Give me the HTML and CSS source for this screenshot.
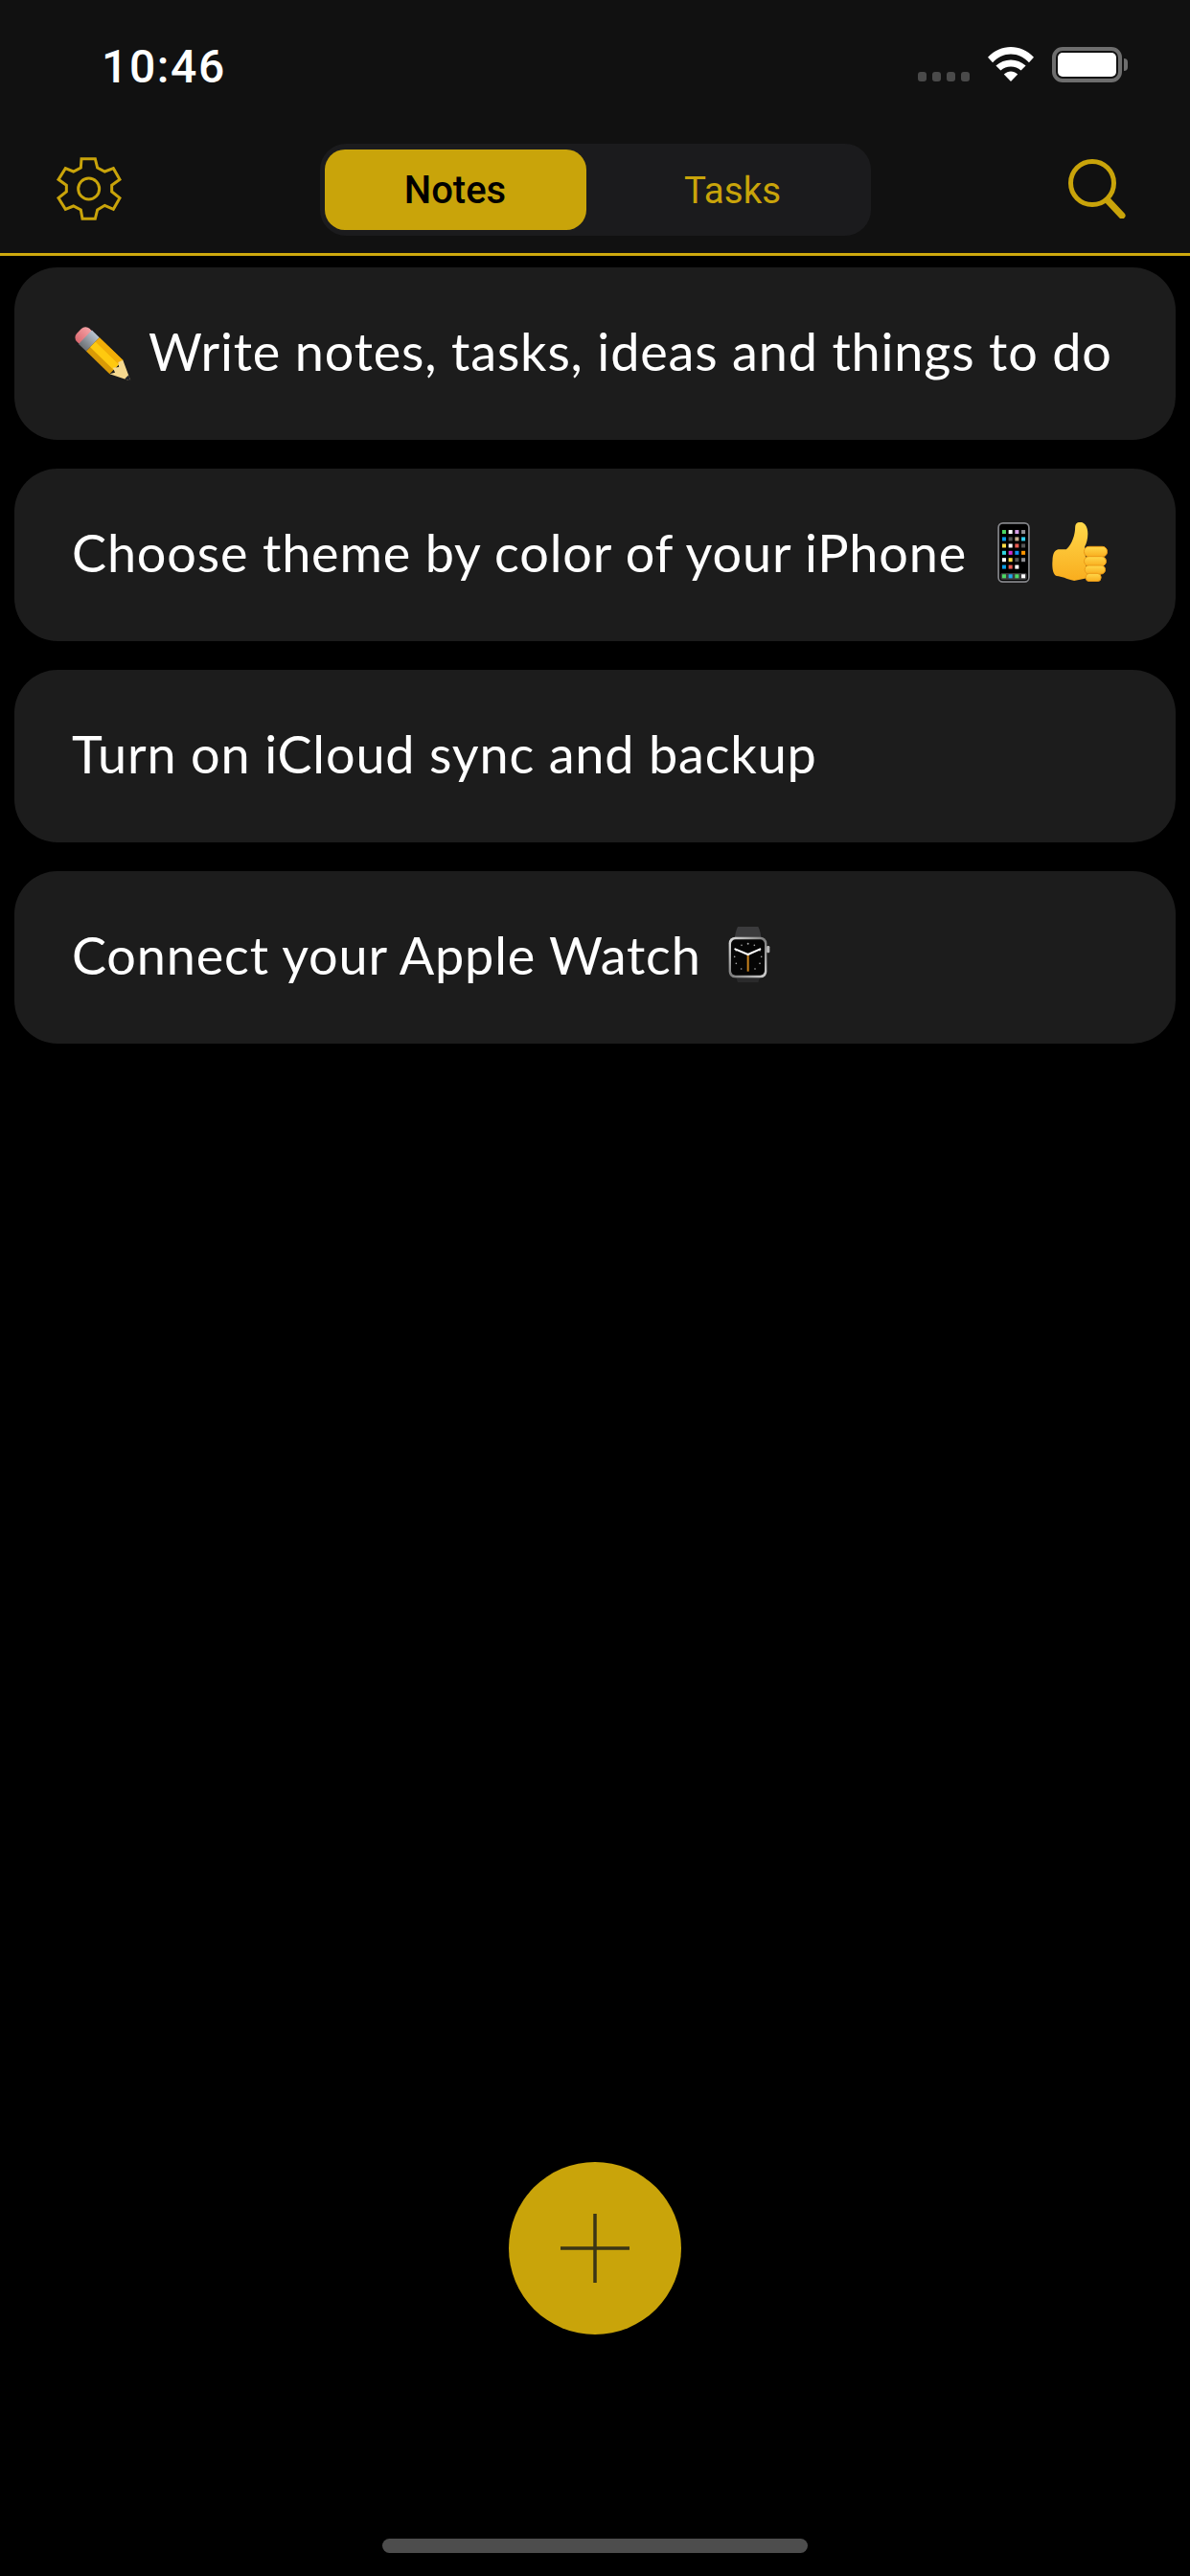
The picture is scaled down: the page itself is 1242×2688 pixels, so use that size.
FILE: index.html
```html
<!DOCTYPE html>
<html lang="en">
<head>
    <meta charset="UTF-8">
    <meta name="viewport" content="width=device-width, initial-scale=1.0">
    <title>Notes</title>
    <link rel="stylesheet" href="styles.css">
</head>
<body>
<div class="page">
  <header class="header">
    <div class="status">
      <span class="time">10:46</span>
      <div class="status-icons">
        <div class="signal"><i></i><i></i><i></i><i></i></div>
        <svg class="wifi" viewBox="0 0 143 107">
          <path fill="#fff" d="M0 32C20 11 45 0 71.500 0S123 11 143 32L128 48C112 31 93 22 71.500 22S31 31 15 48Z"/>
          <path fill="#fff" d="M25 58C39 46 54 40 71.500 40S104 46 118 58L103 73C94 65 84 61 71.500 61S49 65 40 73Z"/>
          <path fill="#fff" d="M50 85C57 79 64 76 71.500 76S86 79 93 85L71.500 107Z"/>
        </svg>
        <div class="battery">
          <div class="battery-body"><div class="battery-fill"></div></div>
          <div class="battery-cap"></div>
        </div>
      </div>
    </div>
    <nav class="nav">
      <svg class="gear" viewBox="0 0 258 252">
        <path d="M105 32H148L155 60L178 72L205 62L225 97L200 115V135L225 155L205 190L178 178L155 192L148 220H108L103 192L80 180L55 190L33 155L58 135V115L33 97L55 62L80 72L103 60Z"/>
        <circle cx="128" cy="126" r="33"/>
      </svg>
      <div class="tabs">
        <div class="tab tab-active">Notes</div>
        <div class="tab">Tasks</div>
      </div>
      <svg class="search" viewBox="0 0 60 62">
        <circle cx="25" cy="25" r="22.500"/>
        <path d="M41 43L56 59"/>
      </svg>
    </nav>
  </header>

  <main class="list">
    <div class="note">
      <svg class="emoji pencil" viewBox="10 7 63 61">
        <defs>
          <linearGradient id="eraser" x1="0" y1="0" x2="0" y2="1">
            <stop offset="0" stop-color="#f6a3a6"/>
            <stop offset="1" stop-color="#d9686f"/>
          </linearGradient>
          <linearGradient id="ferrule" x1="0" y1="0" x2="0" y2="1">
            <stop offset="0" stop-color="#b9c4d0"/>
            <stop offset="1" stop-color="#6d7074"/>
          </linearGradient>
        </defs>
        <g transform="translate(17.500 16.500) rotate(44)">
          <rect x="0" y="-9.500" width="15" height="19" rx="6" fill="url(#eraser)"/>
          <rect x="9" y="-10" width="11" height="20" fill="url(#ferrule)"/>
          <rect x="20" y="-10" width="34" height="20" fill="#d99a06"/>
          <rect x="20" y="-10" width="34" height="6" fill="#f3ae08"/>
          <rect x="20" y="-4" width="34" height="8" fill="#ffc90f"/>
          <path d="M54 -10L75 0L54 10L57 5L52 3L56 -2L52 -5Z" fill="#f6d98f"/>
          <path d="M69 -3L75 0L69 3Z" fill="#23252b"/>
        </g>
      </svg>
      <span class="note-text">Write notes, tasks, ideas and things to do</span>
    </div>

    <div class="note">
      <span class="note-text">Choose theme by color of your iPhone</span>
      <svg class="emoji phone" viewBox="0 0 100 188">
        <rect x="2.500" y="2.500" width="95" height="183" rx="14" fill="#000" stroke="#85868a" stroke-width="5"/>
        <rect x="9" y="158" width="82" height="21" rx="5" fill="#3a3a3c"/>
        <g class="app-row"><rect x="14" y="24" width="12" height="12" fill="#4cd964"/><rect x="34" y="24" width="12" height="12" fill="#fff"/><rect x="54" y="24" width="12" height="12" fill="#d9a0e8"/><rect x="74" y="24" width="12" height="12" fill="#8e8e93"/></g>
        <g class="app-row"><rect x="14" y="46" width="12" height="12" fill="#0a9ee8"/><rect x="34" y="46" width="12" height="12" fill="#555"/><rect x="54" y="46" width="12" height="12" fill="#c8b090"/><rect x="74" y="46" width="12" height="12" fill="#30d0f0"/></g>
        <g class="app-row"><rect x="14" y="67" width="12" height="12" fill="#ffdd44"/><rect x="34" y="67" width="12" height="12" fill="#fff"/><rect x="54" y="67" width="12" height="12" fill="#e85a50"/><rect x="74" y="67" width="12" height="12" fill="#555"/></g>
        <g class="app-row"><rect x="14" y="89" width="12" height="12" fill="#30d8e0"/><rect x="34" y="89" width="12" height="12" fill="#d030d0"/><rect x="54" y="89" width="12" height="12" fill="#1090f0"/><rect x="74" y="89" width="12" height="12" fill="#ff9500"/></g>
        <g class="app-row"><rect x="14" y="111" width="12" height="12" fill="#fff"/><rect x="34" y="111" width="12" height="12" fill="#ffdd44"/><rect x="54" y="111" width="12" height="12" fill="#555"/><rect x="74" y="111" width="12" height="12" fill="#8e8e93"/></g>
        <g class="app-row"><rect x="14" y="133" width="12" height="12" fill="#0a9ee8"/><rect x="34" y="133" width="12" height="12" fill="#e85a50"/><rect x="54" y="133" width="12" height="12" fill="#fff"/></g>
        <g class="app-row"><rect x="14" y="162" width="12" height="12" fill="#4cd964"/><rect x="34" y="162" width="12" height="12" fill="#1ea7f0"/><rect x="54" y="162" width="12" height="12" fill="#4cd964"/><rect x="74" y="162" width="12" height="12" fill="#fff"/></g>
      </svg>
      <svg class="emoji thumb" viewBox="195 30 175 186">
        <defs>
          <linearGradient id="skin" x1="0" y1="0" x2="0" y2="1">
            <stop offset="0" stop-color="#ffd84a"/>
            <stop offset="1" stop-color="#f9ad1e"/>
          </linearGradient>
        </defs>
        <path fill="url(#skin)" d="M215 115H240C260 97 268 66 268 44C268 27 290 25 300 38C313 55 307 90 298 106L305 205L265 213C240 207 226 199 210 198C198 195 195 170 197 150C197 130 203 117 215 115Z"/>
        <g fill="url(#skin)" stroke="#ec9a16" stroke-width="3">
          <rect x="296" y="106" width="72" height="32" rx="15"/>
          <rect x="296" y="137" width="69" height="30" rx="15"/>
          <rect x="298" y="165" width="64" height="27" rx="13"/>
          <rect x="301" y="190" width="48" height="25" rx="12"/>
        </g>
      </svg>
    </div>

    <div class="note">
      <span class="note-text">Turn on iCloud sync and backup</span>
    </div>

    <div class="note">
      <span class="note-text">Connect your Apple Watch</span>
      <svg class="emoji watch" viewBox="28 16 132 178">
        <defs>
          <linearGradient id="steel" x1="0" y1="0" x2="1" y2="1">
            <stop offset="0" stop-color="#e2e2e2"/>
            <stop offset="0.5" stop-color="#7c7c7c"/>
            <stop offset="1" stop-color="#d4d4d4"/>
          </linearGradient>
        </defs>
        <path d="M58 18H122C128 30 130 42 132 55H48C50 42 52 30 58 18Z" fill="#3b3b3d"/>
        <path d="M52 175H128L122 192H58Z" fill="#2a2a2b"/>
        <rect x="148" y="78" width="10" height="22" rx="4" fill="#b8b8b8"/>
        <rect x="30" y="50" width="119" height="128" rx="20" fill="url(#steel)"/>
        <rect x="37" y="58" width="105" height="112" rx="14" fill="#050505"/>
        <g fill="#a8a8a8">
          <circle cx="90" cy="71" r="3"/><circle cx="70" cy="76" r="2.500"/><circle cx="110" cy="76" r="2.500"/>
          <circle cx="53" cy="92" r="2.500"/><circle cx="127" cy="92" r="2.500"/><circle cx="48" cy="112" r="2.500"/>
          <circle cx="132" cy="112" r="2.500"/><circle cx="53" cy="133" r="2.500"/><circle cx="127" cy="133" r="2.500"/>
          <circle cx="69" cy="150" r="2.500"/><circle cx="112" cy="150" r="2.500"/>
        </g>
        <path d="M90 105V158" stroke="#c8821c" stroke-width="6"/>
        <path d="M90 105L50 88M90 105L128 88" stroke="#fff" stroke-width="6" stroke-linecap="round"/>
      </svg>
    </div>
  </main>

  <div class="fab-row">
    <div class="fab">
      <svg class="plus" viewBox="0 0 72 72"><path d="M36 0V72M0 36H72"/></svg>
    </div>
  </div>

  <div class="home-row"><div class="home-bar"></div></div>
</div>
</body>
</html>
```
FILE: styles.css
```css
body {
    margin: 0;
    background-color: #000;
    font-family: Roboto, 'Noto Sans', sans-serif;
    color: #fff;
}

svg {
    display: block;
    flex-shrink: 0;
}

.page {
    width: 1242px;
    height: 2688px;
    display: flex;
    flex-direction: column;
    overflow: hidden;
}

/* top bar */
.header {
    height: 264px;
    background-color: #111;
    border-bottom: 3px solid #cea90e;
    display: flex;
    flex-direction: column;
    flex-shrink: 0;
}

.status {
    height: 150px;
    box-sizing: border-box;
    padding: 51px 65px 0 106px;
    display: flex;
    justify-content: space-between;
    align-items: flex-start;
}

.time {
    font-size: 48px;
    font-weight: 500;
    line-height: 38px;
    letter-spacing: 1.600px;
}

.status-icons {
    display: flex;
    align-items: flex-end;
    height: 37px;
    margin-top: -2px;
    gap: 19px;
}

.signal {
    display: flex;
    gap: 6px;
    margin-bottom: 1px;
}

.signal i {
    width: 9px;
    height: 10px;
    border-radius: 3px;
    background-color: #4a4a4a;
}

.wifi {
    width: 48px;
    height: 36px;
    margin-bottom: 1px;
}

.battery {
    display: flex;
    align-items: center;
    height: 37px;
}

.battery-body {
    width: 73px;
    height: 37px;
    box-sizing: border-box;
    border: 4px solid #6e6e6e;
    border-radius: 11px;
    padding: 2px;
}

.battery-fill {
    height: 100%;
    background-color: #fff;
    border-radius: 5px;
}

.battery-cap {
    width: 4px;
    height: 13px;
    margin-left: 2px;
    background-color: #6e6e6e;
    border-radius: 0 6px 6px 0;
}

.nav {
    height: 96px;
    padding: 0 67px;
    display: grid;
    grid-template-columns: 1fr auto 1fr;
    align-items: center;
}

.gear {
    width: 86px;
    height: 84px;
    margin: -2px 0 0 -17px;
    fill: none;
    stroke: #c9a40a;
    stroke-width: 9;
}

.tabs {
    width: 575px;
    height: 96px;
    box-sizing: border-box;
    padding: 6px 5px;
    background-color: #1b1b1d;
    border-radius: 27px;
    display: grid;
    grid-template-columns: 273px 1fr;
}

.tab {
    display: flex;
    align-items: center;
    justify-content: center;
    font-size: 38.500px;
    color: #c9a40a;
    padding-left: 14px;
}

.tab-active {
    background-color: #c9a40a;
    color: #000;
    font-size: 40px;
    font-weight: 500;
    border-radius: 21px;
    padding-left: 0;
}

.search {
    width: 60px;
    height: 62px;
    justify-self: end;
    margin-top: -2px;
    fill: none;
    stroke: #c9a40a;
    stroke-width: 5;
}

.search path {
    stroke-width: 7;
    stroke-linecap: round;
}

/* notes */
.list {
    flex: 1;
    padding: 12px 15px 0;
    display: flex;
    flex-direction: column;
    gap: 30px;
}

.note {
    height: 180px;
    box-sizing: border-box;
    padding: 0 0 6px 60px;
    background-color: #1c1c1c;
    border-radius: 45px;
    display: flex;
    align-items: center;
}

.note-text {
    font-family: Lato, 'Noto Sans', sans-serif;
    font-size: 54px;
    font-weight: 400;
    letter-spacing: 0.830px;
    white-space: nowrap;
}

.pencil {
    width: 63px;
    height: 61px;
    margin-right: 17px;
}

.phone {
    width: 34px;
    height: 63px;
    margin-left: 32px;
}

.thumb {
    width: 60px;
    height: 62px;
    margin-left: 22px;
}

.watch {
    width: 44px;
    height: 60px;
    margin-left: 28px;
}

/* add button */
.fab-row {
    display: flex;
    justify-content: center;
    padding-bottom: 213px;
}

.fab {
    width: 180px;
    height: 180px;
    border-radius: 50%;
    background-color: #c9a40a;
    display: flex;
    align-items: center;
    justify-content: center;
}

.plus {
    width: 72px;
    height: 72px;
    fill: none;
    stroke: #3a3516;
    stroke-width: 3.500;
}

.home-row {
    display: flex;
    justify-content: center;
    padding-bottom: 24px;
}

.home-bar {
    width: 444px;
    height: 15px;
    border-radius: 8px;
    background-color: #4d4d4d;
}
```
